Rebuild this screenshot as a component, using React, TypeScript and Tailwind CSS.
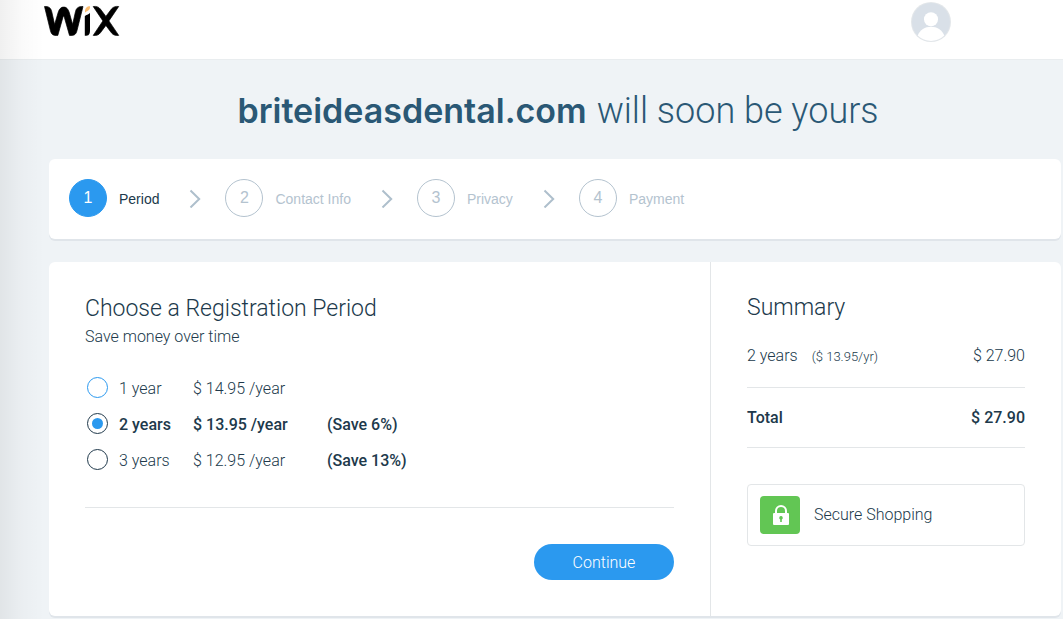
import { Fragment, useState } from 'react';

const steps = ['Period', 'Contact Info', 'Privacy', 'Payment'];

const periods = [
  { years: 1, label: '1 year', price: '$ 14.95 /year', save: '', ring: 'border-[#2b99ef]' },
  { years: 2, label: '2 years', price: '$ 13.95 /year', save: '(Save 6%)', ring: 'border-[#20394b]' },
  { years: 3, label: '3 years', price: '$ 12.95 /year', save: '(Save 13%)', ring: 'border-[#20394b]' },
];

function WixLogo() {
  return (
    <svg width="76" height="32" viewBox="0 0 76 32" role="img" aria-label="Wix">
      <g stroke="#000" strokeWidth="0.700" strokeLinejoin="round">
        <path d="M0.500 1.500 C4.500 1.200 6.900 2.800 7.700 6.500 L10.600 19.500 L14 8 C15.200 3.800 17 2.100 19.700 2.100 C22.400 2.100 24.200 3.800 25.400 8 L28.600 19.500 L31.500 6.500 C32.300 2.800 35 1.200 39 1.500 L33 25.500 C31.900 29.800 30 30.700 25.500 30.400 L20.400 12.400 C20 11 19.300 11 18.900 12.400 L13.800 30.400 C9.300 30.700 7.500 29.800 6.400 25.500 Z" />
        <path d="M49.200 1.500 C52.500 1.100 54.600 1.800 56.400 4.100 L61.900 11.400 L67.400 4.100 C69.200 1.800 71.500 1.100 74.700 1.500 L64.900 15.900 L74.700 30.400 C71.500 30.800 69.200 30.100 67.400 27.800 L61.900 20.400 L56.400 27.800 C54.600 30.100 52.500 30.800 49.200 30.400 L58.900 15.900 Z" />
      </g>
      <path d="M40.800 11.200 C42 9.800 44.500 9.600 46 8 L46 25 C46 29.500 45 30.800 40.800 30.800 Z" />
      <path d="M41 7.500 C40.800 3 43 1.300 46 1.300 C46.200 5 44.500 5.500 43 6.200 C42 6.700 41.600 7 41 7.500 Z" fill="#fbbd71" />
    </svg>
  );
}

function Avatar() {
  return (
    <svg width="40" height="40" viewBox="0 0 40 40" aria-hidden="true">
      <circle cx="20" cy="20" r="20" fill="#e3e7ea" />
      <circle cx="20" cy="20" r="19" fill="#d9e0e8" />
      <circle cx="20" cy="17.300" r="7" fill="#fff" />
      <path d="M6.700 33.500 C9 28 14 24.700 20 24.700 C26 24.700 31 28 33.300 33.500 A19 19 0 0 1 6.700 33.500 Z" fill="#fff" />
    </svg>
  );
}

function Chevron() {
  return (
    <svg width="12" height="20" viewBox="0 0 12 20" fill="none" stroke="#aebfcc" strokeWidth="2" aria-hidden="true">
      <path d="M1.500 2.500 L10.200 11 L1.500 19.500" />
    </svg>
  );
}

export default function App() {
  const [selected, setSelected] = useState(2);

  return (
    <div className="relative min-h-screen bg-[#eff3f6] font-[Roboto,sans-serif] font-light text-[#20394b]">
      <header className="flex h-[60px] items-start justify-between border-b border-[#e9edef] bg-white pt-[2px] pr-28 pl-11">
        <a href="#home" className="pt-[3px]">
          <WixLogo />
        </a>
        <button type="button" aria-label="Account">
          <Avatar />
        </button>
      </header>

      <main className="pr-[2px] pl-[49px]">
        <h1 className="flex h-[99px] items-baseline justify-center gap-[10px] pt-6 pl-[6px] text-[36px] whitespace-nowrap text-[#2a5875]">
          <span className="font-[Inter,sans-serif] text-[34px] font-semibold">briteideasdental.com</span>
          <span>will soon be yours</span>
        </h1>

        <ol className="flex h-20 items-center rounded-md bg-white pb-[2px] pl-5 font-['Liberation_Sans',sans-serif] text-sm font-normal shadow-[0_2px_0_#e0e5ea]">
          {steps.map((step, i) => (
            <Fragment key={step}>
              {i > 0 && (
                <li className="mr-6 ml-[30px]" aria-hidden="true">
                  <Chevron />
                </li>
              )}
              <li className={`flex items-center gap-3 ${i === 0 ? 'text-[#20394b]' : 'text-[#b4c3cf]'}`}>
                <span
                  className={`flex size-[38px] items-center justify-center rounded-full border text-base ${
                    i === 0 ? 'border-[#2b99ef] bg-[#2b99ef] text-white' : 'border-[#b4c3cf] text-[#b4c3cf]'
                  }`}
                >
                  {i + 1}
                </span>
                <span className="pt-[2px]">{step}</span>
              </li>
            </Fragment>
          ))}
        </ol>

        <div className="mt-[23px] flex rounded-md bg-white shadow-[0_2px_0_#e0e5ea]">
          <form className="flex-1 pt-[33px] pr-9 pb-9 pl-9" onSubmit={(e) => e.preventDefault()}>
            <h2 id="period-title" className="text-[23px] leading-7">
              Choose a Registration Period
            </h2>
            <p className="text-base leading-7">Save money over time</p>

            <div role="radiogroup" aria-labelledby="period-title" className="mt-[18px] border-b border-[#e3e6e8] pb-[30px]">
              {periods.map((p) => {
                const on = p.years === selected;
                return (
                  <div key={p.years} className={`flex h-9 items-center text-base ${on ? 'font-medium' : ''}`}>
                    <input
                      type="radio"
                      id={`period-${p.years}`}
                      name="period"
                      checked={on}
                      onChange={() => setSelected(p.years)}
                      className={`ml-[2px] flex size-[21px] appearance-none items-center justify-center rounded-full border ${p.ring} before:size-[11px] before:rounded-full checked:before:bg-[#2b99ef]`}
                    />
                    <label htmlFor={`period-${p.years}`} className="flex pt-1 pl-[11px]">
                      <span className="w-[74px]">{p.label}</span>
                      <span className="w-[134px]">{p.price}</span>
                      <span className="font-medium">{p.save}</span>
                    </label>
                  </div>
                );
              })}
            </div>

            <div className="mt-9 flex justify-end">
              <button type="submit" className="h-9 w-[140px] rounded-full bg-[#2b99ef] pt-[2px] text-base text-white">
                Continue
              </button>
            </div>
          </form>

          <aside className="w-[351px] border-l border-[#e3e6e8] pt-8 pr-9 pl-9">
            <h2 className="text-[23px] leading-7">Summary</h2>
            <div className="mt-3 flex h-[54px] items-start border-b border-[#e3e6e8] text-base">
              <div className="flex h-11 w-full items-center">
                <span>2 years</span>
                <span className="pt-[2px] pl-[14px] text-[13px]">($ 13.95/yr)</span>
                <span className="ml-auto">$ 27.90</span>
              </div>
            </div>
            <div className="flex h-[60px] items-center justify-between border-b border-[#e3e6e8] text-base font-medium">
              <span>Total</span>
              <span>$ 27.90</span>
            </div>
            <div className="mt-9 flex h-[62px] items-center gap-[14px] rounded border border-[#e3e6e8] pl-3 text-base">
              <span className="flex h-[38px] w-10 items-center justify-center rounded bg-[#62c654]">
                <svg width="16" height="20" viewBox="0 0 16 20" aria-hidden="true" className="ml-[2px]">
                  <path d="M3 9 V6 A5 5 0 0 1 13 6 V9" fill="none" stroke="#fff" strokeWidth="2" />
                  <rect y="8" width="16" height="12" rx="1" fill="#fff" />
                  <path d="M8 11 a1.800 1.800 0 0 1 0.800 3.400 V17 H7.200 V14.400 A1.800 1.800 0 0 1 8 11 Z" fill="#62c654" />
                </svg>
              </span>
              Secure Shopping
            </div>
          </aside>
        </div>
      </main>

      <div className="pointer-events-none absolute inset-y-0 left-0 w-11 bg-linear-to-r from-black/6 via-black/2 to-transparent" />
    </div>
  );
}
